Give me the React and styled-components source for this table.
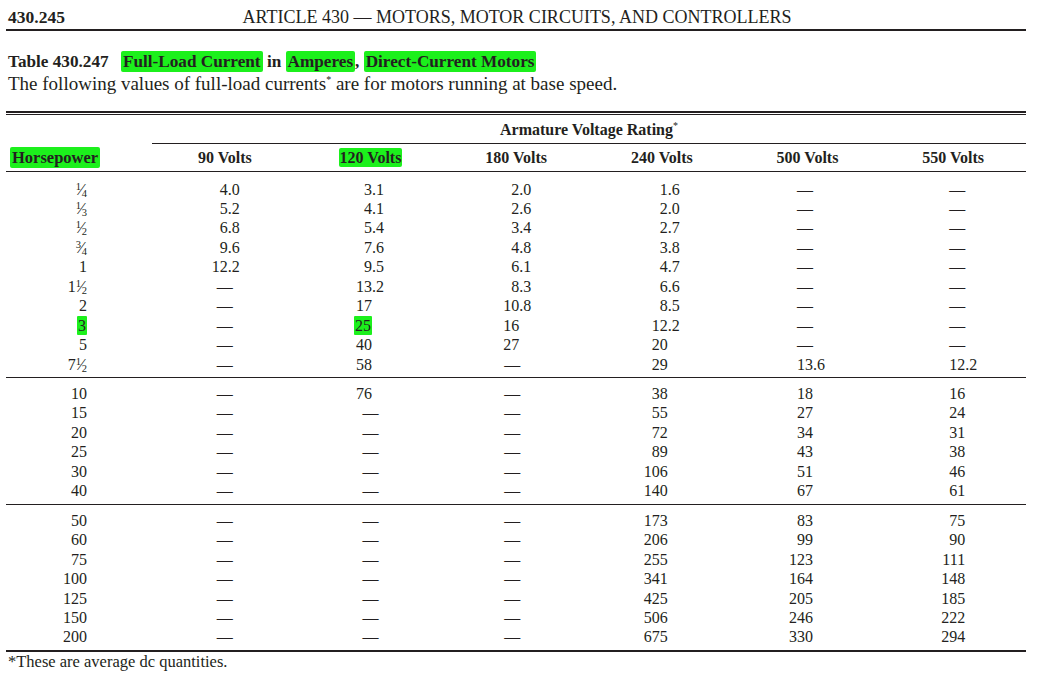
import React from "react";
import styled, { createGlobalStyle } from "styled-components";

const GlobalStyle = createGlobalStyle`
  html, body {
    margin: 0;
    background: #fff;
  }
  body {
    font-family: "Liberation Serif", "DejaVu Serif", serif;
    color: #231f20;
  }
`;

const INK = "#231f20";
const GREEN = "#1cf01c";

const Page = styled.div`
  width: 1020px;
  margin-left: 6px;
`;

const RunningHead = styled.header`
  display: grid;
  grid-template-columns: 1fr auto 1fr;
  align-items: baseline;
  padding: 5px 0 0 2px;
  line-height: 24px;
  border-bottom: 2px solid ${INK};
`;

const SectionNo = styled.span`
  font-weight: 700;
  font-size: 17.5px;
`;

const ArticleTitle = styled.span`
  font-size: 18px;
`;

const Caption = styled.div`
  padding: 20px 0 0 2px;
`;

const CaptionTitle = styled.div`
  font-weight: 700;
  font-size: 17.2px;
  line-height: 22px;
`;

const Mark = styled.mark`
  background: ${GREEN};
  color: inherit;
  padding: 1px ${(p) => p.$pad ?? 2}px;
  margin-left: ${(p) => p.$gap ?? 0}px;
  border-radius: 2px;
`;

const CaptionNote = styled.div`
  font-size: 19px;
  line-height: 20px;
  margin-top: 1px;
`;

const Star = styled.sup`
  font-size: 10px;
  line-height: 0;
  vertical-align: ${(p) => p.$lift ?? 7}px;
  font-weight: 400;
`;

const Table = styled.div`
  margin-top: 17px;
  border-top: 2px solid ${INK};
  padding-top: 1px;
`;

const SuperHead = styled.div`
  display: grid;
  grid-template-columns: 146px 1fr;
  border-top: 1px solid ${INK};
`;

const Spanner = styled.div`
  grid-column: 2;
  text-align: center;
  font-weight: 700;
  font-size: 16px;
  line-height: 20px;
  padding: 5px 0 3px;
  border-bottom: 1px solid ${INK};
`;

const HeadRow = styled.div`
  display: grid;
  grid-template-columns: 146px repeat(6, 1fr);
  font-weight: 700;
  font-size: 16px;
  line-height: 20px;
  padding: 4px 0 2.5px;
  border-bottom: 1px solid ${INK};
`;

const HeadCell = styled.div`
  text-align: ${(p) => (p.$left ? "left" : "center")};
  padding-left: ${(p) => (p.$left ? 4 : 0)}px;
  font-size: ${(p) => (p.$left ? 16.5 : 16)}px;
`;

const Body = styled.div`
  padding-top: 2px;
`;

const Group = styled.div`
  padding: 6px 0 3px;
  border-bottom: ${(p) => (p.$last ? 2.5 : 1)}px solid ${INK};
`;

const Row = styled.div`
  display: grid;
  grid-template-columns: 146px repeat(6, 1fr);
  font-size: 16px;
  line-height: 19.45px;
`;

const HpCell = styled.div`
  text-align: right;
  padding-right: 65px;
`;

const NumCell = styled.div`
  display: grid;
  grid-template-columns: calc(50% + ${(p) => p.$shift}px) 1fr;
`;

const IntPart = styled.span`
  text-align: right;
`;

const FracPart = styled.span`
  text-align: left;
`;

const Dash = styled.span`
  grid-column: 1 / span 2;
  justify-self: center;
  margin-left: ${(p) => (p.$shift > 0 ? p.$shift * 2 : 0)}px;
  margin-right: ${(p) => (p.$shift < 0 ? -p.$shift * 2 : 0)}px;
`;

const HiNum = styled.span`
  background: ${GREEN};
  padding: 1px 1px;
  border-radius: 1px;
`;

const Fraction = styled.span`
  white-space: nowrap;
`;

const Numer = styled.span`
  font-size: 10.5px;
  line-height: 0;
  vertical-align: 5px;
`;

const Denom = styled.span`
  font-size: 10.5px;
  line-height: 0;
  vertical-align: -2px;
`;

const Slash = styled.span`
  font-size: 17px;
  line-height: 0;
  margin: 0 -1px;
`;

const Footnote = styled.div`
  font-size: 16.5px;
  line-height: 18px;
  padding: 1px 0 0 2px;
`;

const columns = [
  { label: "90 Volts", dec: 3, dash: 0 },
  { label: "120 Volts", dec: 1.5, dash: 0, hi: true },
  { label: "180 Volts", dec: 3, dash: -4 },
  { label: "240 Volts", dec: 6, dash: 0 },
  { label: "500 Volts", dec: 5.5, dash: -2.5 },
  { label: "550 Volts", dec: 12, dash: 4 },
];

// "!" marks a highlighted value
const groups = [
  [
    ["1/4", "4.0", "3.1", "2.0", "1.6", "—", "—"],
    ["1/3", "5.2", "4.1", "2.6", "2.0", "—", "—"],
    ["1/2", "6.8", "5.4", "3.4", "2.7", "—", "—"],
    ["3/4", "9.6", "7.6", "4.8", "3.8", "—", "—"],
    ["1", "12.2", "9.5", "6.1", "4.7", "—", "—"],
    ["1 1/2", "—", "13.2", "8.3", "6.6", "—", "—"],
    ["2", "—", "17", "10.8", "8.5", "—", "—"],
    ["!3", "—", "!25", "16", "12.2", "—", "—"],
    ["5", "—", "40", "27", "20", "—", "—"],
    ["7 1/2", "—", "58", "—", "29", "13.6", "12.2"],
  ],
  [
    ["10", "—", "76", "—", "38", "18", "16"],
    ["15", "—", "—", "—", "55", "27", "24"],
    ["20", "—", "—", "—", "72", "34", "31"],
    ["25", "—", "—", "—", "89", "43", "38"],
    ["30", "—", "—", "—", "106", "51", "46"],
    ["40", "—", "—", "—", "140", "67", "61"],
  ],
  [
    ["50", "—", "—", "—", "173", "83", "75"],
    ["60", "—", "—", "—", "206", "99", "90"],
    ["75", "—", "—", "—", "255", "123", "111"],
    ["100", "—", "—", "—", "341", "164", "148"],
    ["125", "—", "—", "—", "425", "205", "185"],
    ["150", "—", "—", "—", "506", "246", "222"],
    ["200", "—", "—", "—", "675", "330", "294"],
  ],
];

const Frac = ({ text }) => {
  const [n, d] = text.split("/");
  return (
    <Fraction>
      <Numer>{n}</Numer>
      <Slash>⁄</Slash>
      <Denom>{d}</Denom>
    </Fraction>
  );
};

const Horsepower = ({ value }) => {
  const hi = value.startsWith("!");
  const v = hi ? value.slice(1) : value;
  const parts = v.split(" ");
  const content = parts.map((p, i) =>
    p.includes("/") ? <Frac key={i} text={p} /> : <span key={i}>{p}</span>
  );
  return <HpCell>{hi ? <HiNum>{content}</HiNum> : content}</HpCell>;
};

const Amps = ({ value, col }) => {
  if (value === "—") {
    return (
      <NumCell $shift={col.dec}>
        <Dash $shift={col.dash}>—</Dash>
      </NumCell>
    );
  }
  const hi = value.startsWith("!");
  const v = hi ? value.slice(1) : value;
  const [whole, dec] = v.split(".");
  return (
    <NumCell $shift={col.dec}>
      <IntPart>{hi ? <HiNum>{whole}</HiNum> : whole}</IntPart>
      <FracPart>{dec ? "." + dec : ""}</FracPart>
    </NumCell>
  );
};

export default function App() {
  return (
    <>
      <GlobalStyle />
      <Page>
        <RunningHead>
          <SectionNo>430.245</SectionNo>
          <ArticleTitle>ARTICLE 430 — MOTORS, MOTOR CIRCUITS, AND CONTROLLERS</ArticleTitle>
          <span />
        </RunningHead>

        <Caption>
          <CaptionTitle>
            Table 430.247 <Mark $gap={8}>Full-Load Current</Mark> in <Mark>Amperes</Mark>,{" "}
            <Mark>Direct-Current Motors</Mark>
          </CaptionTitle>
          <CaptionNote>
            The following values of full-load currents<Star>*</Star> are for motors running at base speed.
          </CaptionNote>
        </Caption>

        <Table>
          <SuperHead>
            <Spanner>
              Armature Voltage Rating<Star $lift={6}>*</Star>
            </Spanner>
          </SuperHead>
          <HeadRow>
            <HeadCell $left>
              <Mark $pad={2}>Horsepower</Mark>
            </HeadCell>
            {columns.map((c) => (
              <HeadCell key={c.label}>{c.hi ? <Mark $pad={1}>{c.label}</Mark> : c.label}</HeadCell>
            ))}
          </HeadRow>
          <Body>
            {groups.map((rows, gi) => (
              <Group key={gi} $last={gi === groups.length - 1}>
                {rows.map((r, ri) => (
                  <Row key={ri}>
                    <Horsepower value={r[0]} />
                    {r.slice(1).map((v, ci) => (
                      <Amps key={ci} value={v} col={columns[ci]} />
                    ))}
                  </Row>
                ))}
              </Group>
            ))}
          </Body>
        </Table>

        <Footnote>*These are average dc quantities.</Footnote>
      </Page>
    </>
  );
}
